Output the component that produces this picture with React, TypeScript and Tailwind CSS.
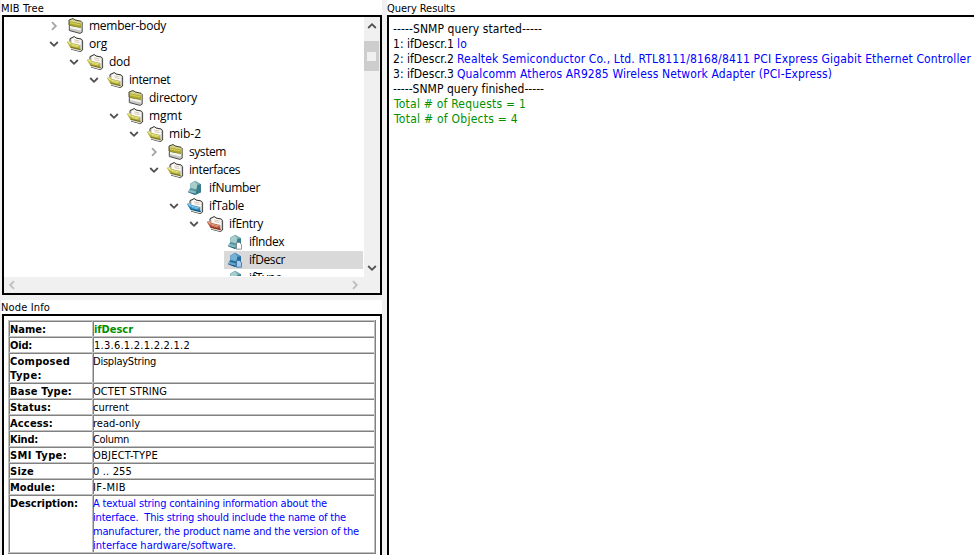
import { useLayoutEffect, useRef, useState } from "react";
import type { ReactNode } from "react";

/** Text tracked so that it occupies exactly `w` pixels. */
function Fit({ w, children, className = "" }: { w: number; children: string; className?: string }) {
  const ref = useRef<HTMLSpanElement>(null);
  const [spacing, setSpacing] = useState(0);
  useLayoutEffect(() => {
    if (ref.current) {
      setSpacing((w - ref.current.getBoundingClientRect().width) / children.length);
    }
  }, [w, children]);
  return (
    <span ref={ref} className={`inline-block whitespace-pre ${className}`} style={{ letterSpacing: spacing }}>
      {children}
    </span>
  );
}

type IconKind = "closed" | "open" | "table" | "entry" | "leaf" | "column" | "selected";

function ClosedFolder() {
  return (
    <svg width="17" height="18" viewBox="0 0 17 18" className="shrink-0">
      <path d="M2 3 6 1.5 8.5 2.5l6 1.5.8 2v9.5L13 16.5 3 14z" fill="#dcdcd8" />
      <path d="m2.3 3 3.7-1 2 1.2 6 1.4v2.2L2.3 4.6z" fill="#d6d389" />
      <path d="M2 4.3 14 6.6v4.2L2 8.4z" fill="#a9a42b" />
      <path d="m2.5 5 11 2.2v1.4l-11-2.2z" fill="#d0cb55" />
      <path d="m2 8 12 2.4v.7L2 8.7z" fill="#858026" />
      <path d="M3 9.3 13.7 11.5v2L3 11.3z" fill="#f6f6f4" />
      <path d="m3 11.3 10.7 2.2v2.2L3 13.5z" fill="#c6c6c2" />
      <path d="M2 8V3l4-1.5L8.3 3l6.2 1.4" fill="none" stroke="#33331c" strokeWidth=".9" />
      <path d="M2.3 8.5v5l10.7 2.9 2.2-1.2V5" fill="none" stroke="#3a3937" strokeWidth=".9" />
    </svg>
  );
}

function OpenFolder({ main, light, dark }: { main: string; light: string; dark: string }) {
  return (
    <svg width="18" height="18" viewBox="0 0 18 18" className="-ml-px shrink-0">
      <path d="m4.500 3.500 4-2 2 1.200 4.800 1 1.400 1.800V15L14.500 16.700 5 14z" fill="#cfcdc6" />
      <path d="m5.500 4 3-1.400 2 1.100 4.300.9V10L6 8z" fill="#fdfcf8" />
      <path d="m8 4.800 5.500 1.100M8.500 6.600l5 1" stroke="#cdb9a8" strokeWidth=".8" />
      <path d="M4 6.500V3.600l4.300-2.100L10.200 3l5 1" fill="none" stroke="#1e1e1e" strokeWidth=".9" />
      <path d="M15.300 4 16.600 5.700V15l-2.200 1.600-9.400-2.500" fill="none" stroke="#333" strokeWidth=".9" />
      <path d="m.8 6.700 3.200-.5 1.300 1.900 8.200 1.900 1.200 5-10.500-2.600z" fill={main} />
      <path d="m1.600 6.900 2.100-.3 1.200 1.900 8.200 1.900.2 1-9.700-2.200z" fill={light} />
      <path d="m3.900 11.400 10.500 2.500.3 1.300-10-2.500z" fill={dark} />
      <path d="m5.800 10.500 6 1.400" stroke={light} strokeWidth=".8" />
      <path d="m5 13.200 9 2.300v.7l-8.800-2.300z" fill="#f2f2ee" />
    </svg>
  );
}

function Cube({ page, blue }: { page?: boolean; blue?: boolean }) {
  return (
    <svg width="16" height="18" viewBox="0 0 16 18" className="shrink-0">
      <path d="m3.2 4.5 4.800-2.800 6 3.500v8L8.200 16 .8 12.800l2.400-2z" fill={blue ? "#4289b6" : "#66a3ab"} />
      <path d="M3.500 4.700 8 2.200 10.500 5l-1 5.500-6-1z" fill={blue ? "#75b1d5" : "#a8cdca"} />
      <path d="m8 1.700 6 3.500-3.400 1.300z" fill={blue ? "#5798c1" : "#7dafb3"} />
      <path d="m10.500 6 3.500-.8v8L8.200 16z" fill={blue ? "#286a99" : "#397d8a"} />
      <path d="m3.500 9 6 1.500-.7 2L2 10.700z" fill={blue ? "#2b6c9a" : "#5796a0"} />
      <path d="m2 10.700 6.800 1.800-.6 2.300-7.400-2z" fill={blue ? "#68a5cb" : "#86bbbf"} />
      <path d="m.8 12.800 7.400 2V16l-6.700-2.400z" fill={blue ? "#164f7a" : "#286778"} />
      {page && (
        <path
          d="M9.500 9.500h3l2 2v4.700h-5z"
          fill={blue ? "#a7cbed" : "#fff"}
          stroke={blue ? "#316fa0" : "#777f84"}
          strokeWidth=".8"
        />
      )}
    </svg>
  );
}

function NodeIcon({ kind }: { kind: IconKind }) {
  switch (kind) {
    case "closed":
      return <ClosedFolder />;
    case "open":
      return <OpenFolder main="#b5b038" light="#e9e78c" dark="#77731e" />;
    case "table":
      return <OpenFolder main="#2483b8" light="#8bd0ef" dark="#125983" />;
    case "entry":
      return <OpenFolder main="#b65336" light="#e5a38c" dark="#7e3019" />;
    case "leaf":
      return <Cube />;
    case "column":
      return <Cube page />;
    default:
      return <Cube page blue />;
  }
}

const turns = { down: "", up: "rotate-180", left: "rotate-90", right: "-rotate-90" };

function Chevron({ dir, color = "#505050" }: { dir: keyof typeof turns; color?: string }) {
  return (
    <svg width="10" height="10" viewBox="0 0 10 10" className={`shrink-0 ${turns[dir]}`}>
      <path d="m1.2 3 3.8 3.8L8.8 3" fill="none" stroke={color} strokeWidth="1.8" />
    </svg>
  );
}

interface TreeNode {
  label: string;
  w: number;
  pad: string;
  icon: IconKind;
  state?: "expanded" | "collapsed";
}

const nodes: TreeNode[] = [
  { label: "member-body", w: 77, pad: "pl-[45px]", icon: "closed", state: "collapsed" },
  { label: "org", w: 18, pad: "pl-[45px]", icon: "open", state: "expanded" },
  { label: "dod", w: 21, pad: "pl-[65px]", icon: "open", state: "expanded" },
  { label: "internet", w: 41, pad: "pl-[85px]", icon: "open", state: "expanded" },
  { label: "directory", w: 48, pad: "pl-[105px]", icon: "closed" },
  { label: "mgmt", w: 33, pad: "pl-[105px]", icon: "open", state: "expanded" },
  { label: "mib-2", w: 32, pad: "pl-[125px]", icon: "open", state: "expanded" },
  { label: "system", w: 37, pad: "pl-[145px]", icon: "closed", state: "collapsed" },
  { label: "interfaces", w: 51, pad: "pl-[145px]", icon: "open", state: "expanded" },
  { label: "ifNumber", w: 51, pad: "pl-[165px]", icon: "leaf" },
  { label: "ifTable", w: 35, pad: "pl-[165px]", icon: "table", state: "expanded" },
  { label: "ifEntry", w: 34, pad: "pl-[185px]", icon: "entry", state: "expanded" },
  { label: "ifIndex", w: 35, pad: "pl-[205px]", icon: "column" },
  { label: "ifDescr", w: 36, pad: "pl-[205px]", icon: "selected" },
  { label: "ifType", w: 33, pad: "pl-[205px]", icon: "column" },
];

function TreeRow({ node }: { node: TreeNode }) {
  return (
    <div className={`flex h-[18px] shrink-0 pr-px ${node.pad}`}>
      <div className="flex w-[15px] shrink-0 items-center">
        {node.state && (
          <Chevron
            dir={node.state === "expanded" ? "down" : "right"}
            color={node.state === "expanded" ? "#505050" : "#a6a6a6"}
          />
        )}
      </div>
      <div className={`flex flex-1 items-center ${node.icon === "selected" ? "bg-[#d9d9d9]" : ""}`}>
        <div className="flex w-[21px] shrink-0 pl-[3px]">
          <NodeIcon kind={node.icon} />
        </div>
        <Fit w={node.w} className="ml-1 text-[12px] leading-[18px]">
          {node.label}
        </Fit>
      </div>
    </div>
  );
}

function Caption({ w, children, className = "" }: { w: number; children: string; className?: string }) {
  return (
    <Fit w={w} className={`text-[11px] leading-[15px] ${className}`}>
      {children}
    </Fit>
  );
}

function MibTree() {
  return (
    <div className="ml-0.5 flex h-[280px] w-[380px] shrink-0 flex-col border-2 border-black bg-white">
      <div className="flex h-[260px] shrink-0">
        <div className="flex h-[259px] w-[360px] flex-col overflow-hidden font-['Open_Sans','Noto_Sans',sans-serif]">
          {nodes.map((n) => (
            <TreeRow key={n.label} node={n} />
          ))}
        </div>
        <div className="flex w-4 flex-col items-center bg-[#f0f0f0]">
          <div className="flex h-6 items-center pb-1.5">
            <Chevron dir="up" />
          </div>
          <div className="flex h-[30px] w-[15px] items-center justify-center self-start bg-[#cdcdcd]">
            <div className="size-[9px] bg-[#f0f0f0]" />
          </div>
          <div className="mt-auto flex h-[18px] items-center">
            <Chevron dir="down" />
          </div>
        </div>
      </div>
      <div className="flex h-4 items-center justify-between bg-[#f0f0f0] pr-5 pl-[3px]">
        <Chevron dir="left" color="#bfbfbf" />
        <Chevron dir="right" color="#bfbfbf" />
      </div>
    </div>
  );
}

const cell = "border-t border-l border-[#c0c0c0] shadow-[inset_1px_1px_0_#808080] pt-0.5 leading-[14px]";

function InfoRow({ labels, height, children }: { labels: [string, number][]; height: string; children: ReactNode }) {
  return (
    <div className={`flex ${height}`}>
      <div className={`flex w-[84px] flex-col items-start pl-px font-bold ${cell}`}>
        {labels.map(([text, w]) => (
          <Fit key={text} w={w}>
            {text}
          </Fit>
        ))}
      </div>
      <div className={`flex flex-1 flex-col items-start ${cell}`}>{children}</div>
    </div>
  );
}

function NodeInfo() {
  return (
    <div className="ml-0.5 h-[300px] w-[380px] shrink-0 border-2 border-black bg-white pt-1 pl-1 text-[11px]">
      <div className="w-[368px] border-r border-b border-[#808080]">
        <div className="border-r border-b border-[#c0c0c0]">
          <InfoRow labels={[["Name:", 36]]} height="h-4">
            <Fit w={39} className="ml-px font-bold text-[#009000]">ifDescr</Fit>
          </InfoRow>
          <InfoRow labels={[["Oid:", 22]]} height="h-4">
            <Fit w={96} className="ml-px">1.3.6.1.2.1.2.2.1.2</Fit>
          </InfoRow>
          <InfoRow labels={[["Composed", 60], ["Type:", 32]]} height="h-[30px]">
            <Fit w={63}>DisplayString</Fit>
          </InfoRow>
          <InfoRow labels={[["Base Type:", 62]]} height="h-4">
            <Fit w={74}>OCTET STRING</Fit>
          </InfoRow>
          <InfoRow labels={[["Status:", 41]]} height="h-4">
            <Fit w={36}>current</Fit>
          </InfoRow>
          <InfoRow labels={[["Access:", 43]]} height="h-4">
            <Fit w={47}>read-only</Fit>
          </InfoRow>
          <InfoRow labels={[["Kind:", 28]]} height="h-4">
            <Fit w={36}>Column</Fit>
          </InfoRow>
          <InfoRow labels={[["SMI Type:", 57]]} height="h-4">
            <Fit w={65}>OBJECT-TYPE</Fit>
          </InfoRow>
          <InfoRow labels={[["Size", 24]]} height="h-4">
            <Fit w={39}>0 .. 255</Fit>
          </InfoRow>
          <InfoRow labels={[["Module:", 45]]} height="h-4">
            <Fit w={33}>IF-MIB</Fit>
          </InfoRow>
          <InfoRow labels={[["Description:", 68]]} height="h-[58px]">
            <Fit w={234} className="text-[#0000ff]">A textual string containing information about the</Fit>
            <Fit w={253} className="text-[#0000ff]">{"interface.  This string should include the name of the"}</Fit>
            <Fit w={266} className="text-[#0000ff]">manufacturer, the product name and the version of the</Fit>
            <Fit w={143} className="text-[#0000ff]">interface hardware/software.</Fit>
          </InfoRow>
        </div>
      </div>
    </div>
  );
}

const results = [
  { label: "1: ifDescr.1", value: "lo", w: 10 },
  {
    label: "2: ifDescr.2",
    value: "Realtek Semiconductor Co., Ltd. RTL8111/8168/8411 PCI Express Gigabit Ethernet Controller",
    w: 514,
  },
  { label: "3: ifDescr.3", value: "Qualcomm Atheros AR9285 Wireless Network Adapter (PCI-Express)", w: 375 },
];

function QueryResults() {
  return (
    <div className="flex flex-1 flex-col items-start border-t-2 border-l-2 border-black pt-[5px] pl-1 text-[12px] leading-[15px]">
      <Fit w={149}>-----SNMP query started-----</Fit>
      {results.map((r) => (
        <div key={r.label} className="flex">
          <Fit w={61}>{r.label}</Fit>
          <Fit w={r.w} className="ml-[3px] text-[#0000ff]">{r.value}</Fit>
        </div>
      ))}
      <Fit w={151}>-----SNMP query finished-----</Fit>
      <Fit w={132} className="ml-px text-[#009000]">Total # of Requests = 1</Fit>
      <Fit w={124} className="ml-px text-[#009000]">Total # of Objects = 4</Fit>
    </div>
  );
}

export default function App() {
  return (
    <div className="flex h-[555px] w-[974px] overflow-hidden bg-[#f0f0f0] font-['DejaVu_Sans_Condensed','DejaVu_Sans',sans-serif] text-black">
      <div className="flex w-[382px] shrink-0 flex-col">
        <div className="ml-px flex h-[15px] shrink-0 bg-white">
          <Caption w={43} className="pt-px">MIB Tree</Caption>
        </div>
        <MibTree />
        <div className="mt-[5px] ml-px flex h-[14px] shrink-0 bg-white">
          <Caption w={49}>Node Info</Caption>
        </div>
        <NodeInfo />
      </div>
      <div className="w-[5px] shrink-0" />
      <div className="flex flex-1 flex-col overflow-hidden bg-white">
        <div className="flex h-[15px] shrink-0">
          <Caption w={68} className="pt-px">Query Results</Caption>
        </div>
        <QueryResults />
      </div>
    </div>
  );
}
